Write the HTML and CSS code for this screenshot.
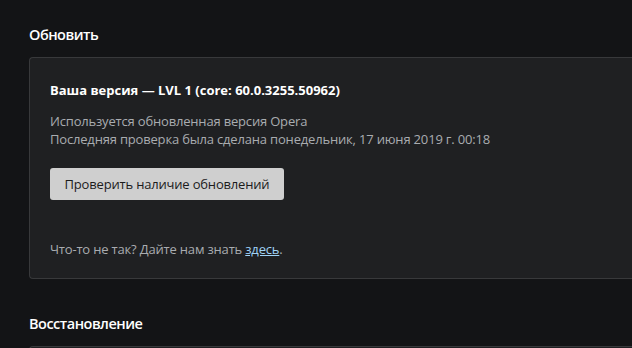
FILE: index.html
```html
<!DOCTYPE html>
<html lang="ru">
<head>
    <meta charset="UTF-8">
    <title>Настройки</title>
    <link rel="stylesheet" href="styles.css">
</head>
<body>
    <div class="page">
        <h2 class="section-title">Обновить</h2>
        <div class="card">
            <div class="version">Ваша версия — LVL 1 (core: 60.0.3255.50962)</div>
            <div class="status">
                <div>Используется обновленная версия Opera</div>
                <div>Последняя проверка была сделана понедельник, 17 июня 2019 г. 00:18</div>
            </div>
            <button class="check-btn">Проверить наличие обновлений</button>
            <div class="feedback">Что-то не так? Дайте нам знать <a href="#">здесь</a>.</div>
        </div>

        <h2 class="section-title">Восстановление</h2>
        <div class="card card-next"></div>
    </div>
</body>
</html>
```

FILE: styles.css
```css
body {
    margin: 0;
    background-color: #131416;
    font-family: "Open Sans", "Noto Sans", sans-serif;
    color: #fff;
    overflow: hidden;
}
.page {
    padding: 0 0 0 29px;
}
.section-title {
    font-size: 14.5px;
    font-weight: 600;
    letter-spacing: -0.5px;
    margin: 0;
    padding: 25px 0 12px;
    line-height: 20px;
}
.card {
    background-color: #1f2022;
    border: 1px solid #38393b;
    border-right: none;
    border-radius: 4px 0 0 4px;
    padding: 23px 0 20px 20px;
    margin-bottom: 10px;
}
.version {
    font-size: 13px;
    font-weight: bold;
    line-height: 18px;
}
.status {
    margin-top: 13px;
    font-size: 13px;
    line-height: 18px;
    letter-spacing: -0.18px;
    color: #a9acb0;
}
.check-btn {
    display: block;
    margin-top: 20px;
    width: 234px;
    height: 32px;
    background-color: #cfcfcf;
    border: none;
    border-radius: 3px;
    font-family: inherit;
    font-size: 13px;
    letter-spacing: -0.18px;
    color: #1c1c1c;
    cursor: pointer;
}
.feedback {
    margin-top: 40px;
    font-size: 13px;
    line-height: 18px;
    letter-spacing: -0.18px;
    color: #a9acb0;
}
.feedback a {
    color: #9fd3f7;
}
.card-next {
    height: 40px;
    padding: 0;
}
```
